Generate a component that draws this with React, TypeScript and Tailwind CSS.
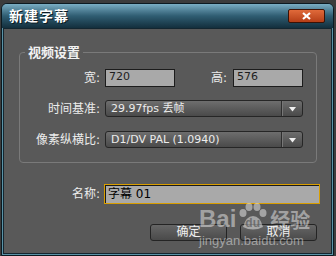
import React from "react";

const font = { fontFamily: '"DejaVu Sans", "Noto Sans CJK SC", sans-serif' };

function Caret() {
  return (
    <div className="flex h-full items-center">
      <div className="h-full w-px bg-[#2e2e2e]" />
      <div className="h-full w-px bg-[#777777]" />
      <svg width="18" height="10" viewBox="0 0 18 10" className="ml-[1px]">
        <path d="M5 3 L12 3 L8.5 7.5 Z" fill="#f0f0f0" />
      </svg>
    </div>
  );
}

function Select({ value }: { value: string }) {
  return (
    <div className="flex h-[17px] w-[198px] items-center justify-between rounded-[3px] border border-[#262626] bg-gradient-to-b from-[#6e6e6e] to-[#4a4a4a] pl-[5px] text-[11px] text-[#ececec]">
      <span className="leading-none">{value}</span>
      <Caret />
    </div>
  );
}

function NumInput({ value }: { value: string }) {
  return (
    <div className="flex h-[18px] w-[70px] items-center border border-[#1c1c1c] bg-[#a9a9a9] pl-[3px] text-[11px] text-[#1e1e1e]">
      {value}
    </div>
  );
}

function Label({ children }: { children: React.ReactNode }) {
  return <div className="text-right text-[12px] text-[#ececec]">{children}</div>;
}

export default function App() {
  return (
    <div className="relative h-[256px] w-[336px] overflow-hidden bg-[#3c3c3c] pt-[3px]" style={font}>
      <div className="ml-[1px] flex h-[253px] w-[333px] flex-col overflow-hidden rounded-t-[6px] border border-[#0c1a21] bg-[#5a93a7]">
        {/* title bar */}
        <div className="flex h-[24px] items-center justify-between bg-gradient-to-b from-[#7aaec4] via-[#2f5d72] to-[#132f3d] pl-[7px] pr-[8px]">
          <span
            className="text-[14px] font-bold tracking-[1px] text-white"
            style={{ textShadow: "1px 1px 0 #0a1a22" }}
          >
            新建字幕
          </span>
          <div className="mt-[-1px] flex h-[14px] w-[37px] items-center justify-center rounded-[2px] border border-[#3a1206] bg-gradient-to-b from-[#e06a3a] to-[#b53e16]">
            <svg width="9" height="8" viewBox="0 0 9 8">
              <path d="M1 1 L8 7 M8 1 L1 7" stroke="#ffffff" strokeWidth="2.2" />
            </svg>
          </div>
        </div>
        {/* body */}
        <div className="flex-1 px-[1px] pb-[1px]">
          <div className="flex h-full flex-col border border-[#142630] bg-[#595959] pt-[14px]">
            <fieldset className="ml-[15px] w-[298px] rounded-[4px] border border-[#7a7a7a] pb-[13px] pt-[6px]">
              <legend className="ml-[5px] px-[3px] text-[13px] font-bold text-[#f2f2f2]">视频设置</legend>
              <div className="grid grid-cols-[80px_auto] items-center gap-x-[5px] gap-y-[13px]">
                <Label>宽:</Label>
                <div className="flex items-center">
                  <NumInput value="720" />
                  <div className="w-[52px] text-right text-[12px] text-[#ececec]">高:</div>
                  <div className="ml-[6px]">
                    <NumInput value="576" />
                  </div>
                </div>
                <Label>时间基准:</Label>
                <Select value="29.97fps 丢帧" />
                <Label>像素纵横比:</Label>
                <Select value="D1/DV PAL (1.0940)" />
              </div>
            </fieldset>
            <div className="mt-[21px] flex items-center">
              <div className="w-[96px] text-right text-[12px] text-[#ececec]">名称:</div>
              <div className="ml-[4px] flex h-[20px] w-[216px] items-center border border-[#d99e00] bg-[#a9a9a9] pl-[3px] text-[12px] text-black shadow-[inset_1px_1px_0_#1a1a1a]">
                字幕 01
              </div>
            </div>
            <div className="ml-[146px] mt-[20px] flex gap-[13px]">
              <div className="flex h-[17px] w-[77px] items-center justify-center rounded-[3px] border border-[#242424] bg-gradient-to-b from-[#666666] to-[#4a4a4a] text-[12px] text-[#f0f0f0]">
                确定
              </div>
              <div className="flex h-[17px] w-[77px] items-center justify-center rounded-[3px] border border-[#242424] bg-gradient-to-b from-[#666666] to-[#4a4a4a] text-[12px] text-[#f0f0f0]">
                取消
              </div>
            </div>
          </div>
        </div>
      </div>
      {/* watermark */}
      <div className="pointer-events-none absolute left-[199px] top-[203px] flex flex-col text-white/45" style={{ fontFamily: '"Liberation Sans", "Noto Sans CJK SC", sans-serif' }}>
        <div className="flex items-end">
          <span className="text-[24px] font-bold leading-none">Bai</span>
          <div className="relative ml-[1px] h-[28px] w-[32px]">
            <svg width="32" height="28" viewBox="0 0 32 28" className="absolute left-0 top-0">
              <ellipse cx="6" cy="10" rx="3.5" ry="4" fill="rgba(255,255,255,0.45)" />
              <ellipse cx="12" cy="4" rx="3.5" ry="4" fill="rgba(255,255,255,0.45)" />
              <ellipse cx="20" cy="4" rx="3.5" ry="4" fill="rgba(255,255,255,0.45)" />
              <ellipse cx="26" cy="10" rx="3.5" ry="4" fill="rgba(255,255,255,0.45)" />
              <path d="M6 24 Q9 13 16 13 Q23 13 26 24 Q16 29 6 24 Z" fill="rgba(255,255,255,0.45)" />
            </svg>
            <span className="absolute bottom-[2px] left-[8px] text-[12px] font-bold leading-none text-[#595959]/70">du</span>
          </div>
          <span className="ml-[1px] text-[20px] font-bold leading-none">经验</span>
        </div>
        <span className="mt-[3px] text-[13px] leading-none">jingyan.baidu.com</span>
      </div>
    </div>
  );
}
